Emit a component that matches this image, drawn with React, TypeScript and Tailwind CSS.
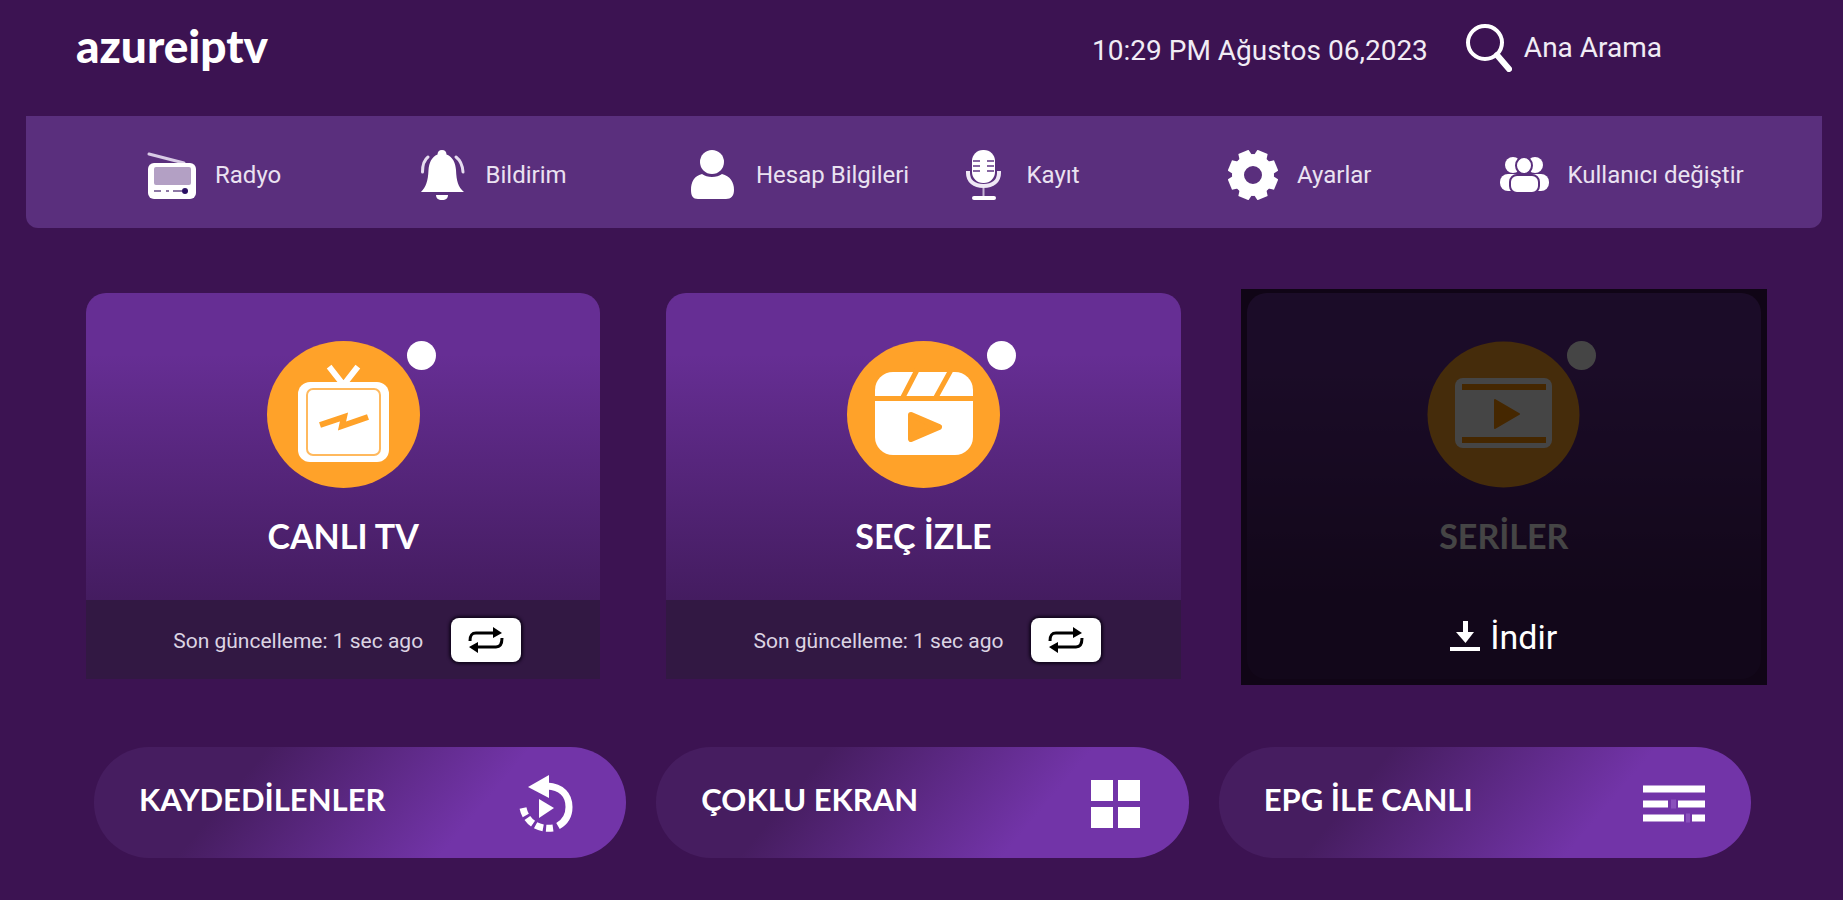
import type { ReactNode } from "react";

const RadioIcon = () => (
  <svg viewBox="0 0 50 50" className="size-[50px] shrink-0" aria-hidden="true">
    <path d="M3 4 L38 13" stroke="#d9cbe6" strokeWidth="3" strokeLinecap="round" />
    <rect x="2" y="13" width="48" height="36" rx="6" fill="#fff" />
    <rect x="8" y="17" width="37" height="18" rx="2" fill="#b3a0c4" />
    <path d="M8 41 H15 M20 41 H23 M27 41 H36" stroke="#8d78a5" strokeWidth="2" />
    <circle cx="39" cy="41" r="3" fill="#2a0f63" />
  </svg>
);

const BellIcon = () => (
  <svg viewBox="0 0 50 50" className="size-[50px] shrink-0" aria-hidden="true">
    <path
      d="M25 0 C28 0 29.500 2 29.500 4.500 C36 7 38.500 13 39 20 C39.500 31 41 37 47 42 H4 C9 37 11 31 11.500 20 C12 13 14.500 7 20.500 4.500 C20.500 2 22 0 25 0 Z"
      fill="#fff"
    />
    <path d="M19 45 H31 C31 48 29 50 25 50 C21 50 19 48 19 45 Z" fill="#fff" />
    <path
      d="M11 7 C7 10 5.500 15 5.500 22 M39 7 C43 10 45.500 15 46 22"
      stroke="#e6dcef"
      strokeWidth="3"
      strokeLinecap="round"
      fill="none"
    />
  </svg>
);

const UserIcon = () => (
  <svg viewBox="0 0 50 50" className="size-[50px] shrink-0" fill="#fff" aria-hidden="true">
    <ellipse cx="25" cy="12" rx="12" ry="12" />
    <path d="M15 24 C20 28 30 28 35 24 C43 26 47 32 47 40 C47 46 44 49 39 49 H11 C6 49 4 46 4 40 C4 32 7 26 15 24 Z" />
  </svg>
);

const MicIcon = () => (
  <svg viewBox="0 0 50 50" className="size-[50px] shrink-0" aria-hidden="true">
    <rect x="14" y="0" width="23" height="33" rx="11" fill="#fff" />
    <path d="M15 11 H22 M29 11 H36 M15 16 H22 M29 16 H36 M15 21 H22 M29 21 H36" stroke="#8767a3" strokeWidth="2" />
    <path d="M10 21 V23 C10 31 16 36 25.500 36 C35 36 41 31 41 23 V21" stroke="#efe8f5" strokeWidth="4" fill="none" />
    <path d="M25.500 38 V46" stroke="#c5b3d4" strokeWidth="2" />
    <path d="M16 48 H36" stroke="#fff" strokeWidth="4" strokeLinecap="round" />
  </svg>
);

const teeth = [22.5, 67.5, 112.5, 157.5, 202.5, 247.5, 292.5, 337.5];

const GearIcon = () => (
  <svg viewBox="0 0 50 50" className="size-[50px] shrink-0" aria-hidden="true">
    <circle cx="25" cy="25" r="15" stroke="#fff" strokeWidth="12" fill="none" />
    {teeth.map((deg) => (
      <path key={deg} d="M18 8 L19.500 0 H30.500 L32 8 Z" fill="#fff" transform={`rotate(${deg} 25 25)`} />
    ))}
  </svg>
);

const UsersIcon = () => (
  <svg viewBox="0 0 50 50" className="size-[50px] shrink-0" fill="#fff" aria-hidden="true">
    <ellipse cx="14" cy="15" rx="8" ry="8" />
    <ellipse cx="36" cy="15" rx="8" ry="8" />
    <rect x="1" y="24" width="22" height="17" rx="8" />
    <rect x="28" y="24" width="22" height="17" rx="8" />
    <g stroke="#5a2f7d" strokeWidth="2">
      <ellipse cx="25" cy="15.500" rx="8" ry="8.500" />
      <rect x="11" y="25" width="29" height="18" rx="7" />
    </g>
  </svg>
);

const SearchIcon = () => (
  <svg viewBox="0 0 46 48" className="h-12 w-[46px] shrink-0" fill="none" stroke="#fff" aria-hidden="true">
    <ellipse cx="19" cy="18.500" rx="17" ry="16.500" strokeWidth="4" />
    <path d="M31 31 L43 45" strokeWidth="6" strokeLinecap="round" />
  </svg>
);

const TvArt = () => (
  <svg viewBox="0 0 153 147" className="h-[147px] w-[153px]" aria-hidden="true">
    <ellipse cx="76.500" cy="73.500" rx="76.500" ry="73.500" fill="#ffa229" />
    <path d="M64 28 L76.500 44 L89 28" stroke="#fff" strokeWidth="6" strokeLinecap="square" fill="none" />
    <rect x="31" y="41" width="91" height="80" rx="12" fill="#fff" />
    <rect x="40" y="48" width="73" height="66" rx="6" fill="none" stroke="#ffb95e" strokeWidth="2" />
    <path d="M53 84 L77 76 L75 85 L101 76" stroke="#ffa229" strokeWidth="6" fill="none" />
  </svg>
);

const MovieArt = () => (
  <svg viewBox="0 0 153 147" className="h-[147px] w-[153px]" aria-hidden="true">
    <ellipse cx="76.500" cy="73.500" rx="76.500" ry="73.500" fill="#ffa229" />
    <rect x="28" y="31" width="98" height="83" rx="18" fill="#fff" />
    <path d="M28 57.500 H126 M70 29 L55 58 M104 29 L88 58" stroke="#ffa229" strokeWidth="5" />
    <path
      d="M64 74 L92 86 L64 98 Z"
      fill="#ffa229"
      stroke="#ffa229"
      strokeWidth="6"
      strokeLinejoin="round"
    />
  </svg>
);

const SeriesArt = () => (
  <svg viewBox="0 0 153 147" className="h-[147px] w-[153px]" aria-hidden="true">
    <ellipse cx="76.500" cy="73.500" rx="76" ry="73" fill="#ffa229" />
    <rect x="28" y="37" width="97" height="70" rx="8" fill="#fff" />
    <path d="M35 46 H119 M35 99 H119" stroke="#ff9200" strokeWidth="6" />
    <path d="M68 59 L92 73 L68 87 Z" fill="#ff9200" stroke="#ff9200" strokeWidth="2" strokeLinejoin="round" />
  </svg>
);

const ReplayIcon = () => (
  <svg viewBox="0 0 62 60" className="h-[60px] w-[62px] shrink-0" aria-hidden="true">
    <path d="M29 13 C44 14 51 22 51 34 C51 43 47 49 40 53" stroke="#fff" strokeWidth="7" fill="none" />
    <path d="M10 14 L31 2 V25 Z" fill="#fff" />
    <path d="M21 26 L36 35 L21 45 Z" fill="#fff" />
    <path d="M5 35 C8 49 20 57 35 55" stroke="#fff" strokeWidth="7" strokeDasharray="8 3" fill="none" />
  </svg>
);

const GridIcon = () => (
  <svg viewBox="0 0 62 60" className="h-[60px] w-[62px] shrink-0" fill="#fff" aria-hidden="true">
    <rect x="10" y="7" width="22" height="21" />
    <rect x="37" y="7" width="22" height="21" />
    <rect x="10" y="34" width="22" height="21" />
    <rect x="37" y="34" width="22" height="21" />
  </svg>
);

const EpgIcon = () => (
  <svg viewBox="0 0 62 60" className="h-[60px] w-[62px] shrink-0" aria-hidden="true">
    <path d="M0 16 H62 M0 31 H25 M35 31 H62 M0 45 H41 M49 45 H62" stroke="#fff" strokeWidth="7" />
    <path d="M28 31 H33 M43 45 H47" stroke="#8a50bb" strokeWidth="9" />
  </svg>
);

const RepeatIcon = () => (
  <svg viewBox="0 0 36 28" className="h-7 w-9" fill="none" stroke="#000" strokeWidth="3" aria-hidden="true">
    <path d="M2 15 C2 10 3 7 8 7 H26" />
    <path d="M34 12 C34 18 32 21 28 21 H9" />
    <path d="M25 1 L34 7 L25 12 Z M10 16 L1 21 L10 27 Z" fill="#000" stroke="none" />
  </svg>
);

const DownloadIcon = () => (
  <svg viewBox="0 0 30 32" className="h-8 w-[30px]" fill="#fff" aria-hidden="true">
    <rect x="13" y="0" width="5" height="12" />
    <path d="M6 11 H24 L15.500 22 Z" />
    <rect x="0" y="26" width="30" height="4" />
  </svg>
);

const navItems = [
  { label: "Radyo", icon: <RadioIcon /> },
  { label: "Bildirim", icon: <BellIcon /> },
  { label: "Hesap Bilgileri", icon: <UserIcon /> },
  { label: "Kayıt", icon: <MicIcon /> },
  { label: "Ayarlar", icon: <GearIcon /> },
  { label: "Kullanıcı değiştir", icon: <UsersIcon /> },
];

const shortcuts = [
  { label: "KAYDEDİLENLER", icon: <ReplayIcon /> },
  { label: "ÇOKLU EKRAN", icon: <GridIcon /> },
  { label: "EPG İLE CANLI", icon: <EpgIcon /> },
];

type CardProps = { title: string; art: ReactNode; locked?: boolean };

function Card({ title, art, locked }: CardProps) {
  return (
    <article className="relative">
      <div className="flex flex-col items-center rounded-t-[20px] bg-linear-to-b from-[#662e94] from-20% to-[#441c60] pt-12 pb-10">
        <div className="relative">
          {art}
          <span className="absolute top-0 -right-4 size-[29px] rounded-full bg-white" />
        </div>
        <h2 className="mt-6 font-[Lato,sans-serif] text-[34px] leading-[48px] font-bold text-white">
          {title}
        </h2>
      </div>
      {locked ? (
        <div className="h-[79px] rounded-b-[20px] bg-[#441c60]" />
      ) : (
        <div className="flex h-[79px] items-center justify-center gap-7 bg-[#321843] pl-2">
          <p className="pt-1 text-[21px] text-[#dcd4e3]">Son güncelleme: 1 sec ago</p>
          <button
            type="button"
            aria-label="Yenile"
            className="flex h-11 w-[70px] items-center justify-center rounded-lg bg-white shadow-[0_0_3px_2px_#12061d]">
            <RepeatIcon />
          </button>
        </div>
      )}

      {locked && (
        <div className="absolute -inset-x-1.5 -top-1 -bottom-1.5 flex items-end justify-center bg-black/73 pb-7">
          <button type="button" className="flex items-center gap-2.5 text-[34px] leading-10 text-white">
            <DownloadIcon />
            İndir
          </button>
        </div>
      )}
    </article>
  );
}

export default function App() {
  return (
    <div className="min-h-screen bg-[#3c1352] font-[Roboto,sans-serif]">
      <header className="flex h-[116px] items-start justify-between pt-6 pr-[181px] pl-[76px] text-[28px] text-[#f1ecf5]">
        <a href="#" className="font-[Lato,sans-serif] text-[46px] leading-[44px] font-black text-white">
          azureiptv
        </a>
        <div className="flex items-center gap-[38px]">
          <time dateTime="2023-08-06T22:29" className="pt-1.5">
            10:29 PM Ağustos 06,2023
          </time>
          <button type="button" className="flex items-center gap-3">
            <SearchIcon />
            Ana Arama
          </button>
        </div>
      </header>

      <nav className="mr-[21px] ml-[26px] grid h-28 grid-cols-6 items-center rounded-b-xl bg-[#5a2f7d] pt-1.5 pr-[53px] pl-[120px] text-2xl text-[#eae2f1]">
        {navItems.map((item) => (
          <a key={item.label} href="#" className="flex items-center gap-[19px] whitespace-nowrap">
            {item.icon}
            {item.label}
          </a>
        ))}
      </nav>

      <main>
        <section className="grid grid-cols-3 gap-[66px] pt-[65px] pr-[82px] pl-[86px]">
          <Card title="CANLI TV" art={<TvArt />} />
          <Card title="SEÇ İZLE" art={<MovieArt />} />
          <Card title="SERİLER" art={<SeriesArt />} locked />
        </section>

        <section className="grid grid-cols-3 gap-[30px] pt-[68px] pr-[92px] pb-8 pl-[94px]">
          {shortcuts.map((item) => (
            <button
              key={item.label}
              type="button"
              className="flex h-[111px] items-center justify-between rounded-full bg-linear-[130deg,#461d60_28%,#7234a8_70%] pr-[46px] pl-[45px] font-[Lato,sans-serif] text-[31px] font-bold text-white">
              <span className="pb-1.5">{item.label}</span>
              {item.icon}
            </button>
          ))}
        </section>
      </main>
    </div>
  );
}
